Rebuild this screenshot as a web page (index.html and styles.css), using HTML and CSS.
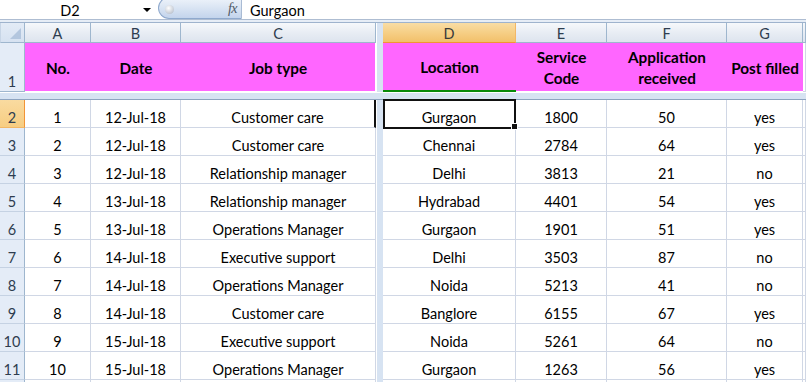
FILE: index.html
```html
<!DOCTYPE html>
<html>
<head>
<meta charset="utf-8">
<link rel="stylesheet" href="styles.css">
</head>
<body>
<div class="app">
  <div class="fbar">
    <div class="namebox"><span class="nb-text">D2</span><span class="nb-arrow"></span></div>
    <div class="pill"><span class="knob"></span><span class="fx">fx</span></div>
    <div class="formula">Gurgaon</div>
  </div>
  <div class="fgap"></div>
  <div class="sheet">
    <!-- header row -->
    <div class="corner"><span class="tri"></span></div>
    <div class="ch">A</div><div class="ch">B</div><div class="ch">C</div>
    <div class="vsplit"></div>
    <div class="ch ch-act">D</div><div class="ch">E</div><div class="ch">F</div><div class="ch">G</div><div class="ch"></div>
    <!-- row 1 -->
    <div class="rh rh1">1</div>
    <div class="hc">No.</div><div class="hc">Date</div><div class="hc hc-c">Job type</div>
    <div class="vsplit"></div>
    <div class="hc hc-d">Location</div><div class="hc">Service<br>Code</div><div class="hc">Application<br>received</div><div class="hc">Post filled</div><div class="c blank"></div>
    <!-- split -->
    <div class="hsplit"></div>
    <!-- data rows -->
    <div class="rh rh-act">2</div><div class="c">1</div><div class="c">12-Jul-18</div><div class="c c-edge">Customer care</div><div class="vsplit"></div><div class="c sel">Gurgaon</div><div class="c">1800</div><div class="c">50</div><div class="c">yes</div><div class="c"></div>
    <div class="rh">3</div><div class="c">2</div><div class="c">12-Jul-18</div><div class="c">Customer care</div><div class="vsplit"></div><div class="c">Chennai</div><div class="c">2784</div><div class="c">64</div><div class="c">yes</div><div class="c"></div>
    <div class="rh">4</div><div class="c">3</div><div class="c">12-Jul-18</div><div class="c">Relationship manager</div><div class="vsplit"></div><div class="c">Delhi</div><div class="c">3813</div><div class="c">21</div><div class="c">no</div><div class="c"></div>
    <div class="rh">5</div><div class="c">4</div><div class="c">13-Jul-18</div><div class="c">Relationship manager</div><div class="vsplit"></div><div class="c">Hydrabad</div><div class="c">4401</div><div class="c">54</div><div class="c">yes</div><div class="c"></div>
    <div class="rh">6</div><div class="c">5</div><div class="c">13-Jul-18</div><div class="c">Operations Manager</div><div class="vsplit"></div><div class="c">Gurgaon</div><div class="c">1901</div><div class="c">51</div><div class="c">yes</div><div class="c"></div>
    <div class="rh">7</div><div class="c">6</div><div class="c">14-Jul-18</div><div class="c">Executive support</div><div class="vsplit"></div><div class="c">Delhi</div><div class="c">3503</div><div class="c">87</div><div class="c">no</div><div class="c"></div>
    <div class="rh">8</div><div class="c">7</div><div class="c">14-Jul-18</div><div class="c">Operations Manager</div><div class="vsplit"></div><div class="c">Noida</div><div class="c">5213</div><div class="c">41</div><div class="c">no</div><div class="c"></div>
    <div class="rh">9</div><div class="c">8</div><div class="c">14-Jul-18</div><div class="c">Customer care</div><div class="vsplit"></div><div class="c">Banglore</div><div class="c">6155</div><div class="c">67</div><div class="c">yes</div><div class="c"></div>
    <div class="rh">10</div><div class="c">9</div><div class="c">15-Jul-18</div><div class="c">Executive support</div><div class="vsplit"></div><div class="c">Noida</div><div class="c">5261</div><div class="c">64</div><div class="c">no</div><div class="c"></div>
    <div class="rh">11</div><div class="c">10</div><div class="c">15-Jul-18</div><div class="c">Operations Manager</div><div class="vsplit"></div><div class="c">Gurgaon</div><div class="c">1263</div><div class="c">56</div><div class="c">yes</div><div class="c"></div>
    <div class="rh"></div><div class="c"></div><div class="c"></div><div class="c"></div><div class="vsplit"></div><div class="c"></div><div class="c"></div><div class="c"></div><div class="c"></div><div class="c"></div>
  </div>
</div>
</body>
</html>
```

FILE: styles.css
```css
* { box-sizing: border-box; }
html, body { margin: 0; padding: 0; background: #fff; }
body {
  width: 806px;
  height: 382px;
  overflow: hidden;
  font-family: Lato, "Open Sans", sans-serif;
  font-size: 14.5px;
  color: #000;
}
.app { display: flex; flex-direction: column; }

/* formula bar */
.fbar {
  height: 20px;
  display: flex;
  align-items: flex-start;
  border-bottom: 1px solid #aebdd2;
  overflow: hidden;
}
.namebox {
  width: 158px;
  height: 20px;
  display: flex;
  align-items: center;
}
.nb-text { width: 140px; text-align: center; font-size: 14.5px; color: #000; }
.nb-arrow {
  margin-left: 3px;
  width: 0; height: 0;
  border-left: 4px solid transparent;
  border-right: 4px solid transparent;
  border-top: 4px solid #000;
}
.pill {
  width: 84px;
  height: 22px;
  margin-top: -3px;
  border: 1px solid #8fa9cd;
  border-right: 1px solid #a9bbd4;
  border-radius: 11px 0 0 11px;
  background: linear-gradient(#eef3fa, #d9e4f3 50%, #c3d4ec);
  display: flex;
  align-items: center;
  justify-content: space-between;
  padding: 2px 4px 0 6px;
}
.knob {
  width: 9px; height: 9px;
  border-radius: 50%;
  background: radial-gradient(circle at 40% 35%, #ffffff, #c3c9d3 70%, #9ea8b6);
}
.fx {
  font-family: "Liberation Serif", serif;
  font-style: italic;
  font-size: 14px;
  color: #4f5864;
  letter-spacing: -0.5px;
}
.formula {
  padding-left: 8px;
  height: 20px;
  display: flex;
  align-items: center;
  font-size: 14.5px;
}
.fgap {
  height: 3px;
  background: #e6edf6;
  border-bottom: 1px solid #9eb3cd;
}

/* sheet grid */
.sheet {
  display: grid;
  grid-template-columns: 25px 66px 90px 195px 7px 133px 91px 120px 76px 1fr;
  grid-template-rows: 20px 49px 8px repeat(11, 28px);
}
.corner {
  position: relative;
  background: linear-gradient(#e3ebf6, #d6e2f1);
  border-right: 1px solid #9eb6ce;
  border-bottom: 1px solid #9eb6ce;
  border-left: 1px solid #c7d5e6;
}
.tri {
  position: absolute;
  right: 3px;
  bottom: 3px;
  width: 0; height: 0;
  border-left: 11px solid transparent;
  border-bottom: 11px solid #b3c6de;
}
.ch {
  background: linear-gradient(#f6f8fb, #e8edf4 50%, #dde4ee);
  border-right: 1px solid #9eb6ce;
  border-bottom: 1px solid #9eb6ce;
  display: flex;
  align-items: center;
  justify-content: center;
  color: #2e3d4f;
  font-size: 14.5px;
  padding-top: 1px;
}
.ch-act {
  background: linear-gradient(#f9dda5, #f6cf86 50%, #f2c06a);
  border-bottom: 1px solid #f29436;
  border-right: 1px solid #f2b766;
  color: #3a3a3a;
}
.rh {
  background: #e4ecf7;
  border-right: 1px solid #9eb6ce;
  border-bottom: 1px solid #c5d2e3;
  display: flex;
  align-items: flex-end;
  justify-content: center;
  padding-bottom: 1px;
  color: #2e3d4f;
  font-size: 14.5px;
}
.rh1 { border-bottom: 1px solid #9eb6ce; }
.rh-act {
  background: linear-gradient(#f9dba0, #f7cd82);
  border-right: 1px solid #f29436;
  border-bottom: 1px solid #f2b766;
}
.vsplit {
  background: #d7e3f2;
  border-left: 1px solid #ffffff;
}
.hsplit {
  grid-column: 1 / -1;
  background: #d7e3f2;
  border-top: 1px solid #ffffff;
  border-bottom: 1px solid #8ea4c0;
}
.hc {
  background: #ff66ff;
  border-bottom: 1px solid #fff;
  display: flex;
  align-items: center;
  justify-content: center;
  text-align: center;
  font-weight: 700;
  font-size: 15.3px;
  line-height: 21px;
  padding-top: 2px;
}
.hc-c { border-right: 1px solid #ffffff; }
.hc-d { border-bottom: 2px solid #0a8a0a; }
.blank { border-bottom: 1px solid #d0d7e5; }
.c {
  border-right: 1px solid #d0d7e5;
  border-bottom: 1px solid #d0d7e5;
  display: flex;
  align-items: flex-end;
  justify-content: center;
  padding-bottom: 1px;
  white-space: nowrap;
}
.c-edge { border-right: 2px solid #111; }
.sel { position: relative; }
.sel::before {
  content: "";
  position: absolute;
  left: 0; top: -1px;
  right: -1px; bottom: -2px;
  border: 2px solid #111;
}
.sel::after {
  content: "";
  position: absolute;
  right: -3px; bottom: -3px;
  width: 5px; height: 5px;
  background: #111;
  border: 1px solid #fff;
}
```
